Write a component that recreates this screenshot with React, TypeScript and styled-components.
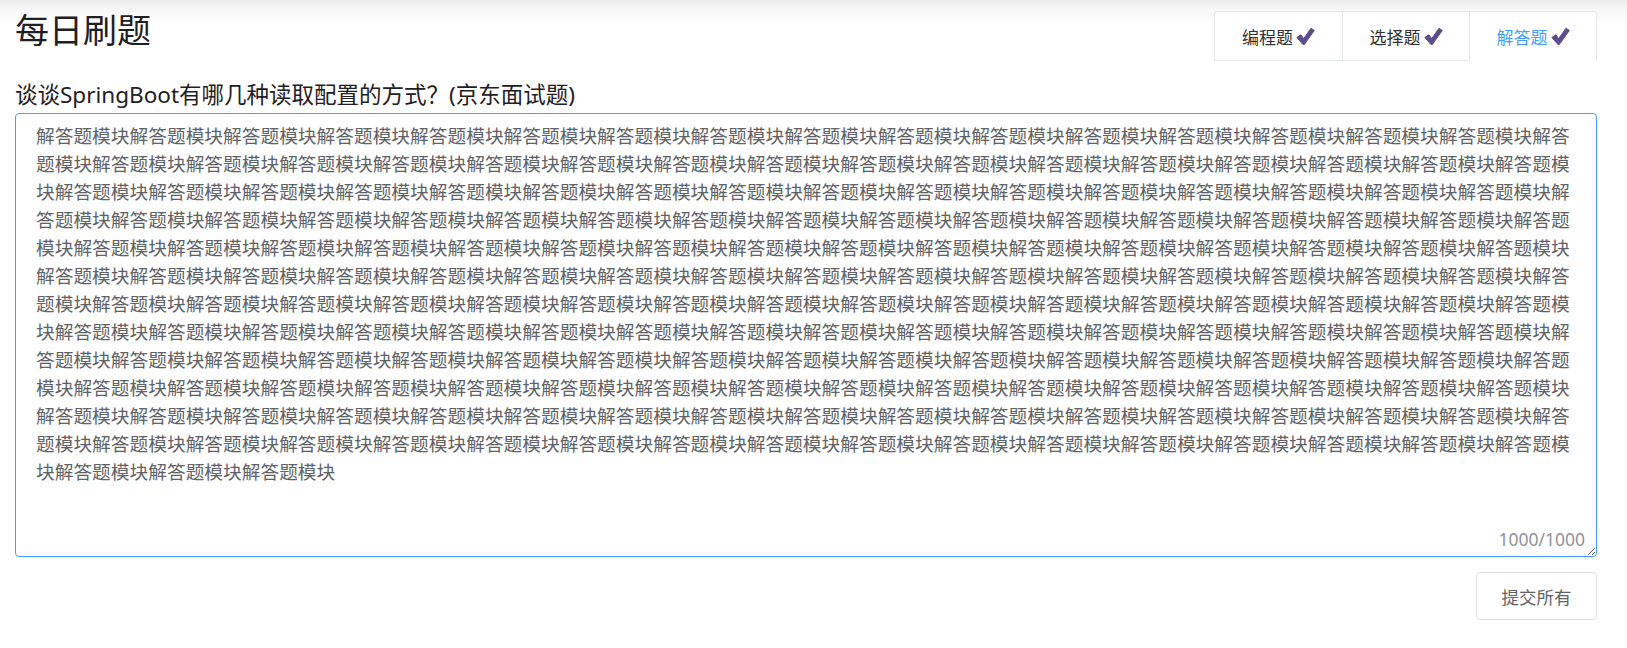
import React from "react";
import styled, { createGlobalStyle } from "styled-components";

const GlobalStyle = createGlobalStyle`
  html, body {
    margin: 0;
    padding: 0;
    background: #ffffff;
  }
  body {
    font-family: "Noto Sans", "Noto Sans CJK SC", sans-serif;
  }
  * { box-sizing: border-box; }
`;

const Page = styled.div`
  min-height: 648px;
  padding: 0 30px 0 15px;
  background: linear-gradient(to bottom, #ececec 0px, #f7f7f7 10px, #ffffff 24px);
`;

const HeaderRow = styled.div`
  display: flex;
  justify-content: space-between;
  align-items: flex-start;
  height: 80px;
`;

const Title = styled.h1`
  margin: 5px 0 0 0;
  font-family: "Noto Sans CJK SC", sans-serif;
  font-size: 34px;
  font-weight: 400;
  line-height: 48px;
  color: #1f2023;
`;

const Tabs = styled.div`
  display: flex;
  margin-top: 11px;
  height: 50px;
  border: 1px solid #e4e7ed;
  border-bottom: none;
  border-radius: 4px 4px 0 0;
  background: #ffffff;
`;

const Tab = styled.div<{ $active?: boolean }>`
  display: flex;
  align-items: center;
  justify-content: center;
  gap: 3px;
  width: 127px;
  height: 49px;
  font-family: "Noto Sans CJK SC", sans-serif;
  font-size: 17px;
  color: ${(p) => (p.$active ? "#409eff" : "#303133")};
  border-bottom: 1px solid ${(p) => (p.$active ? "transparent" : "#e4e7ed")};
  & + & {
    border-left: 1px solid #e4e7ed;
  }
`;

const Check = () => (
  <svg width="19" height="19" viewBox="0 0 18 18">
    <path
      d="M0.8 10 L4.6 7.4 L7.3 11 L14.2 1.2 L17.4 3.2 L7.9 16.6 L6.6 16.6 Z"
      fill="#5b4e8e"
      stroke="#5b4e8e"
      strokeWidth="0.9"
      strokeLinejoin="round"
    />
  </svg>
);

const Question = styled.div`
  font-family: "Noto Sans", "Noto Sans CJK SC", sans-serif;
  font-size: 22.5px;
  line-height: 30px;
  color: #1f2023;
  margin-bottom: 3px;
`;

const AreaWrap = styled.div`
  position: relative;
`;

const Area = styled.textarea`
  display: block;
  width: 100%;
  height: 444px;
  padding: 7px 20px;
  border: 1px solid #409eff;
  border-radius: 4px;
  outline: none;
  font-family: "Noto Sans CJK SC", sans-serif;
  font-size: 18.72px;
  line-height: 28px;
  color: #606266;
  background: #ffffff;
  resize: vertical;
`;

const Counter = styled.span`
  position: absolute;
  right: 12px;
  bottom: 6px;
  font-family: "Noto Sans", sans-serif;
  font-size: 17.5px;
  line-height: 24px;
  color: #909399;
`;

const Footer = styled.div`
  display: flex;
  justify-content: flex-end;
  margin-top: 15px;
`;

const Button = styled.button`
  width: 121px;
  height: 48px;
  border: 1px solid #dcdfe6;
  border-radius: 4px;
  background: #ffffff;
  font-family: "Noto Sans CJK SC", sans-serif;
  font-size: 17.5px;
  color: #606266;
  cursor: pointer;
`;

const text = "解答题模块".repeat(200);

export default function App() {
  return (
    <>
      <GlobalStyle />
      <Page>
        <HeaderRow>
          <Title>每日刷题</Title>
          <Tabs>
            <Tab>
              编程题
              <Check />
            </Tab>
            <Tab>
              选择题
              <Check />
            </Tab>
            <Tab $active>
              解答题
              <Check />
            </Tab>
          </Tabs>
        </HeaderRow>
        <Question>谈谈SpringBoot有哪几种读取配置的方式？(京东面试题)</Question>
        <AreaWrap>
          <Area defaultValue={text} maxLength={1000} />
          <Counter>1000/1000</Counter>
        </AreaWrap>
        <Footer>
          <Button>提交所有</Button>
        </Footer>
      </Page>
    </>
  );
}
